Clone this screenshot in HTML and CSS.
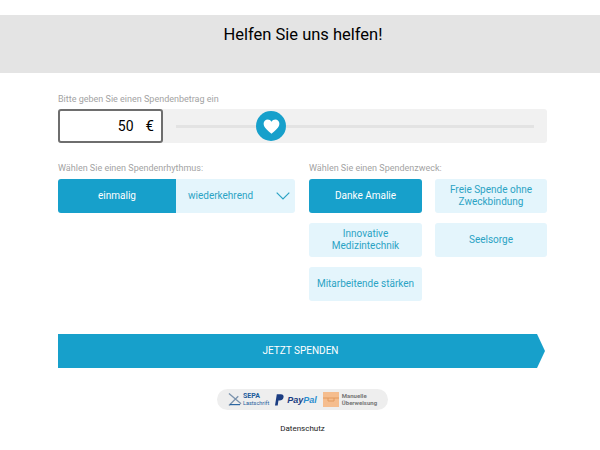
FILE: index.html
```html
<!DOCTYPE html>
<html lang="de">
<head>
  <meta charset="UTF-8" />
  <title>Helfen Sie uns helfen!</title>
  <link rel="stylesheet" href="styles.css">
</head>
<body>
  <header class="page-head">
    <h1>Helfen Sie uns helfen!</h1>
  </header>

  <main class="form">
    <div class="field-label">Bitte geben Sie einen Spendenbetrag ein</div>
    <div class="amount-row">
      <div class="amount-box"><span>50</span><span class="euro">€</span></div>
      <div class="slider">
        <div class="slider-fill"></div>
        <div class="thumb">
          <svg width="17" height="15" viewBox="0 0 18 16"><path d="M9 15.6 C6 13 .6 9.4 .6 5 C.6 2.4 2.6 .6 4.9 .6 C6.6 .6 8.1 1.5 9 3 C9.9 1.5 11.4 .6 13.1 .6 C15.4 .6 17.4 2.4 17.4 5 C17.4 9.4 12 13 9 15.6 Z" fill="#fff"/></svg>
        </div>
        <div class="slider-rest"></div>
      </div>
    </div>

    <div class="columns">
      <section>
        <div class="field-label">Wählen Sie einen Spendenrhythmus:</div>
        <div class="rhythm">
          <div class="rhythm-btn active">einmalig</div>
          <div class="rhythm-btn select">
            <span>wiederkehrend</span>
            <svg width="14" height="8" viewBox="0 0 14 8"><path d="M.7 .7 7 7 13.3 .7" fill="none" stroke="#2ba3c4" stroke-width="1.2"/></svg>
          </div>
        </div>
      </section>
      <section>
        <div class="field-label">Wählen Sie einen Spendenzweck:</div>
        <div class="purposes">
          <div class="purpose active">Danke Amalie</div>
          <div class="purpose">Freie Spende ohne Zweckbindung</div>
          <div class="purpose">Innovative Medizintechnik</div>
          <div class="purpose">Seelsorge</div>
          <div class="purpose">Mitarbeitende stärken</div>
        </div>
      </section>
    </div>

    <div class="submit">JETZT SPENDEN</div>

    <div class="pay-wrap">
      <div class="pay-pill">
        <svg class="sepa-icon" width="14" height="15" viewBox="0 0 15 15"><path d="M1 1 14 12M1 14 11 4" fill="none" stroke="#7b93ad" stroke-width="1.4"/><path d="M2 13 13 13" stroke="#1c5c9c" stroke-width="1.2"/></svg>
        <div class="sepa-text"><b>SEPA</b><span>Lastschrift</span></div>
        <svg class="pp-icon" width="9" height="12" viewBox="0 0 10 13"><path d="M2 0h4.500C9 0 10 1.500 9.500 3.500 9 6 7.300 7 5 7H3.800L3 12.500H0Z" fill="#1b3d82"/></svg>
        <div class="paypal"><b>Pay</b><b class="pal">Pal</b></div>
        <svg class="bank-icon" width="16" height="15" viewBox="0 0 16 15"><rect width="16" height="15" fill="#f5bd8e"/><path d="M0 6H16M5 6V9H11V6" fill="none" stroke="#e29a5f" stroke-width="1"/></svg>
        <div class="bank-text">Manuelle<br>Überweisung</div>
      </div>
    </div>

    <div class="privacy">Datenschutz</div>
  </main>
</body>
</html>
```

FILE: styles.css
```css
* {
  box-sizing: border-box;
}

body {
  margin: 0;
  font-family: Roboto, sans-serif;
  color: #000;
  background: #fff;
}

.page-head {
  margin-top: 15px;
  height: 58px;
  background: #e4e4e4;
  padding: 9px 0 0 6px;
  text-align: center;
}

.page-head h1 {
  margin: 0;
  font-size: 16.5px;
  line-height: 22px;
  font-weight: 400;
}

.form {
  padding: 19px 53px 0 58px;
}

.field-label {
  font-size: 9px;
  line-height: 14px;
  color: #a3a3a3;
  margin-bottom: 3px;
}

.columns .field-label {
  margin-bottom: 4px;
}

/* amount + slider */
.amount-row {
  display: flex;
  align-items: center;
  height: 34px;
  background: #f1f1f1;
  border-radius: 3px;
  margin-bottom: 18px;
}

.amount-box {
  display: flex;
  justify-content: flex-end;
  align-items: center;
  gap: 12px;
  width: 105px;
  height: 34px;
  padding-right: 7px;
  background: #fff;
  border: 2px solid #6e6e6e;
  border-radius: 3px;
  font-size: 14px;
}

.euro {
  font-size: 15px;
}

.slider {
  flex: 1;
  display: flex;
  align-items: center;
  padding: 0 13px;
}

.slider-fill,
.slider-rest {
  height: 3px;
  background: #e3e3e3;
}

.slider-fill {
  width: 80px;
}

.slider-rest {
  flex: 1;
}

.thumb {
  display: flex;
  align-items: center;
  justify-content: center;
  width: 30px;
  height: 30px;
  border-radius: 50%;
  background: #17a0cb;
}

/* two columns */
.columns {
  display: grid;
  grid-template-columns: 237px 238px;
  gap: 14px;
  height: 173px;
}

.rhythm {
  display: flex;
  height: 34px;
  border-radius: 3px;
  overflow: hidden;
  font-size: 10px;
}

.rhythm-btn {
  display: flex;
  align-items: center;
  justify-content: center;
  width: 118px;
  padding-bottom: 1px;
}

.rhythm-btn.active {
  background: #17a0cb;
  color: #fff;
}

.rhythm-btn.select {
  flex: 1;
  justify-content: space-between;
  padding: 0 5px 1px 12px;
  background: #e4f5fc;
  color: #2ba3c4;
}

.purposes {
  display: grid;
  grid-template-columns: 113px 112px;
  grid-auto-rows: 34px;
  gap: 10px 13px;
}

.purpose {
  display: flex;
  align-items: center;
  justify-content: center;
  padding: 0 6px 1px;
  background: #e4f5fc;
  color: #2ba3c4;
  border-radius: 3px;
  font-size: 10px;
  line-height: 12px;
  text-align: center;
}

.purpose.active {
  background: #17a0cb;
  color: #fff;
}

/* donate button with arrow end */
.submit {
  display: flex;
  align-items: center;
  justify-content: center;
  width: 487px;
  height: 34px;
  padding: 0 2px 1px 0;
  background: #17a0cb;
  color: #fff;
  font-size: 10px;
  clip-path: polygon(0 0, 479px 0, 100% 50%, 479px 100%, 0 100%);
}

/* payment logos */
.pay-wrap {
  display: flex;
  justify-content: center;
  margin-top: 21px;
}

.pay-pill {
  display: flex;
  align-items: center;
  width: 171px;
  height: 21px;
  padding-left: 11px;
  background: #eeeeee;
  border-radius: 11px;
}

.sepa-text {
  display: flex;
  flex-direction: column;
  margin-left: 1px;
  color: #1c5c9c;
  font-size: 5.5px;
  line-height: 7px;
}

.sepa-text b {
  font-size: 7px;
}

.pp-icon {
  margin-left: 6px;
}

.paypal {
  margin-left: 3px;
  font-family: "Liberation Sans", sans-serif;
  font-size: 9px;
  font-style: italic;
  color: #1b3d82;
}

.paypal .pal {
  color: #2b8fd0;
}

.bank-icon {
  margin-left: 6px;
}

.bank-text {
  margin-left: 3px;
  color: #777;
  font-size: 6px;
  line-height: 6.5px;
  font-weight: 700;
}

.privacy {
  margin-top: 13px;
  text-align: center;
  font-size: 8px;
  line-height: 12px;
  color: #222;
}
```
